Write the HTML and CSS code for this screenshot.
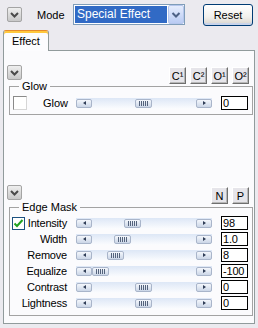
FILE: index.html
```html
<!DOCTYPE html>
<html>
<head>
    <title>Effect Settings</title>
    <link rel="stylesheet" href="styles.css">
</head>
<body>
    <div class="topbar">
        <button class="fold"><svg width="13" height="13" viewBox="0 0 13 13"><polyline points="3,5 6.5,8.5 10,5"/></svg></button>
        <span class="mode-label">Mode</span>
        <div class="combo">
            <span class="combo-value">Special Effect</span>
            <span class="combo-btn"><svg width="14" height="17" viewBox="0 0 14 17"><polyline points="3.5,7 7,10.5 10.5,7"/></svg></span>
        </div>
        <button class="reset">Reset</button>
    </div>

    <div class="tabs">
        <div class="tab">Effect</div>
    </div>

    <div class="panel">
        <div class="section-head">
            <button class="fold"><svg width="13" height="13" viewBox="0 0 13 13"><polyline points="3,5 6.5,8.5 10,5"/></svg></button>
            <div class="mini-btns">
                <button class="mini">C¹</button>
                <button class="mini">C²</button>
                <button class="mini">O¹</button>
                <button class="mini">O²</button>
            </div>
        </div>
        <fieldset class="group glow">
            <legend>Glow</legend>
            <div class="row">
                <span class="check off"></span>
                <span class="label">Glow</span>
                <div class="slider"><span class="arrow left"></span><span class="thumb" style="left: 59px"></span><span class="arrow right"></span></div>
                <input class="value" type="text" value="0">
            </div>
        </fieldset>

        <div class="section-head second">
            <button class="fold"><svg width="13" height="13" viewBox="0 0 13 13"><polyline points="3,5 6.5,8.5 10,5"/></svg></button>
            <div class="mini-btns">
                <button class="mini">N</button>
                <button class="mini">P</button>
            </div>
        </div>
        <fieldset class="group edge">
            <legend>Edge Mask</legend>
            <div class="row">
                <span class="check on"><svg width="11" height="11" viewBox="0 0 11 11"><polyline points="1.5,5.5 4,8 9.5,2"/></svg></span>
                <span class="label">Intensity</span>
                <div class="slider"><span class="arrow left"></span><span class="thumb" style="left: 48px"></span><span class="arrow right"></span></div>
                <input class="value" type="text" value="98">
            </div>
            <div class="row">
                <span class="check none"></span>
                <span class="label">Width</span>
                <div class="slider"><span class="arrow left"></span><span class="thumb" style="left: 38px"></span><span class="arrow right"></span></div>
                <input class="value" type="text" value="1.0">
            </div>
            <div class="row">
                <span class="check none"></span>
                <span class="label">Remove</span>
                <div class="slider"><span class="arrow left"></span><span class="thumb" style="left: 31px"></span><span class="arrow right"></span></div>
                <input class="value" type="text" value="8">
            </div>
            <div class="row">
                <span class="check none"></span>
                <span class="label">Equalize</span>
                <div class="slider"><span class="arrow left"></span><span class="thumb" style="left: 16px"></span><span class="arrow right"></span></div>
                <input class="value" type="text" value="-100">
            </div>
            <div class="row">
                <span class="check none"></span>
                <span class="label">Contrast</span>
                <div class="slider"><span class="arrow left"></span><span class="thumb" style="left: 59px"></span><span class="arrow right"></span></div>
                <input class="value" type="text" value="0">
            </div>
            <div class="row">
                <span class="check none"></span>
                <span class="label">Lightness</span>
                <div class="slider"><span class="arrow left"></span><span class="thumb" style="left: 59px"></span><span class="arrow right"></span></div>
                <input class="value" type="text" value="0">
            </div>
        </fieldset>
    </div>
</body>
</html>
```

FILE: styles.css
```css
body {
    font-family: "Liberation Sans", Arial, sans-serif;
    font-size: 11px;
    color: #000;
    background-color: #ebeaef;
    margin: 0;
    width: 258px;
    height: 328px;
    overflow: hidden;
}
button {
    font: inherit;
    color: #000;
    margin: 0;
    padding: 0;
}
.topbar {
    display: flex;
    align-items: center;
    height: 29px;
    margin-bottom: 1px;
    padding-left: 7px;
}
.fold {
    width: 15px;
    height: 15px;
    box-sizing: border-box;
    border: 1px solid #a4a4a4;
    border-radius: 2px;
    background: linear-gradient(#efefef, #c8c8c8);
    display: flex;
    align-items: center;
    justify-content: center;
    flex: none;
}
.fold svg, .combo-btn svg {
    display: block;
    fill: none;
    stroke: #4a4a4a;
    stroke-width: 2;
}
.mode-label {
    margin-left: 15px;
    width: 36px;
}
.combo {
    display: flex;
    align-items: center;
    gap: 1px;
    width: 112px;
    height: 21px;
    box-sizing: border-box;
    border: 1px solid #7f9db9;
    background: #fff;
    padding-left: 1px;
}
.combo-value {
    width: 92px;
    height: 17px;
    box-sizing: border-box;
    padding-left: 2px;
    background: #316ac5;
    color: #fff;
    font-size: 12px;
    line-height: 17px;
    white-space: nowrap;
}
.combo-btn {
    width: 16px;
    height: 19px;
    box-sizing: border-box;
    border: 1px solid #b5c6ec;
    border-radius: 2px;
    background: linear-gradient(#e6edfd, #b9cbf3);
    display: flex;
    align-items: center;
    justify-content: center;
}
.combo-btn svg {
    stroke: #4d6185;
}
.reset {
    margin-left: auto;
    margin-right: 5px;
    width: 50px;
    height: 22px;
    border: 1px solid #003c74;
    border-radius: 3px;
    background: linear-gradient(#ffffff, #f1f0ec 60%, #d8d4cc);
    box-shadow: inset 0 -2px #c9d4ea;
}
.tabs {
    display: flex;
    padding-left: 3px;
    height: 21px;
    margin-bottom: -1px;
    position: relative;
    z-index: 1;
}
.tab {
    width: 46px;
    box-sizing: border-box;
    border: 1px solid #919b9c;
    border-top-color: #e68b2c;
    border-bottom: none;
    border-radius: 3px 3px 0 0;
    box-shadow: inset 0 2px #ffc83c;
    background: #fcfcfe;
    padding-left: 8px;
    line-height: 21px;
}
.panel {
    margin: 0 3px;
    height: 274px;
    box-sizing: border-box;
    border: 1px solid #919b9c;
    background: #fbfbfd;
    display: flex;
    flex-direction: column;
    padding: 14px 0 7px;
}
.section-head {
    display: flex;
    align-items: flex-start;
    height: 19px;
    padding: 0 5px 0 3px;
    flex: none;
}
.section-head.second {
    margin-top: auto;
}
.mini-btns {
    display: flex;
    gap: 4px;
    margin-left: auto;
    margin-top: 2px;
}
.mini {
    width: 17px;
    height: 17px;
    box-sizing: border-box;
    border: 1px solid;
    border-color: #ffffff #6f6f6f #6f6f6f #ffffff;
    box-shadow: inset -1px -1px #b8b8b8;
    background: #e6e5ea;
    line-height: 14px;
}
.group {
    margin: -4px 1px 0 5px;
    padding: 2px 4px 3px 3px;
    border: 1px solid #a3a3a3;
    min-width: 0;
    flex: none;
}
.group legend {
    padding: 0 3px;
    margin-left: 6px;
    line-height: 13px;
}
.group.edge {
    margin-top: -3px;
    padding-top: 1px;
    padding-bottom: 4px;
}
.row {
    display: flex;
    align-items: center;
    height: 16px;
}
.check {
    width: 13px;
    height: 13px;
    box-sizing: border-box;
    flex: none;
    background: #fff;
    display: flex;
    align-items: center;
    justify-content: center;
}
.check.off {
    border: 1px solid;
    border-color: #8a8a8a #d6d6d6 #d6d6d6 #8a8a8a;
    width: 14px;
    height: 14px;
}
.check.on {
    border: 1px solid #1c5180;
    margin-left: -1px;
}
.check.on svg {
    fill: none;
    stroke: #21a121;
    stroke-width: 2;
}
.check.on + .label {
    width: 45px;
}
.check.none {
    background: none;
}
.label {
    width: 44px;
    box-sizing: border-box;
    padding-right: 3px;
    display: flex;
    justify-content: flex-end;
    white-space: nowrap;
    letter-spacing: -0.2px;
    flex: none;
}
.glow .label {
    justify-content: flex-start;
    padding: 0 0 0 16px;
    letter-spacing: 0;
}
.glow .check.off + .label {
    width: 43px;
}
.slider {
    position: relative;
    width: 136px;
    height: 11px;
    margin-left: 6px;
    flex: none;
    background: linear-gradient(#dde7f6, #fbfcfe);
    display: flex;
    align-items: center;
    justify-content: space-between;
}
.arrow, .thumb {
    height: 9px;
    box-sizing: border-box;
    border: 1px solid #a9b5ca;
    border-radius: 2px;
    background: linear-gradient(#f4f7fc, #cbd6e7);
    display: flex;
    align-items: center;
    justify-content: center;
}
.arrow {
    width: 16px;
}
.arrow::after {
    content: "";
    border-top: 2px solid transparent;
    border-bottom: 2px solid transparent;
}
.arrow.left::after {
    border-right: 3px solid #2f3d57;
}
.arrow.right::after {
    border-left: 3px solid #2f3d57;
}
.thumb {
    position: absolute;
    top: 1px;
    width: 17px;
}
.thumb::after {
    content: "";
    width: 9px;
    height: 5px;
    background: repeating-linear-gradient(90deg, #54637c 0 1px, transparent 1px 2px);
}
.value {
    margin-left: 9px;
    width: 27px;
    height: 14px;
    box-sizing: border-box;
    border: 1px solid #000;
    padding: 0 0 0 1px;
    background: #fff;
    color: #000;
    font-family: "Liberation Sans", Arial, sans-serif;
    font-size: 11px;
    letter-spacing: -0.2px;
    outline: none;
}
```
